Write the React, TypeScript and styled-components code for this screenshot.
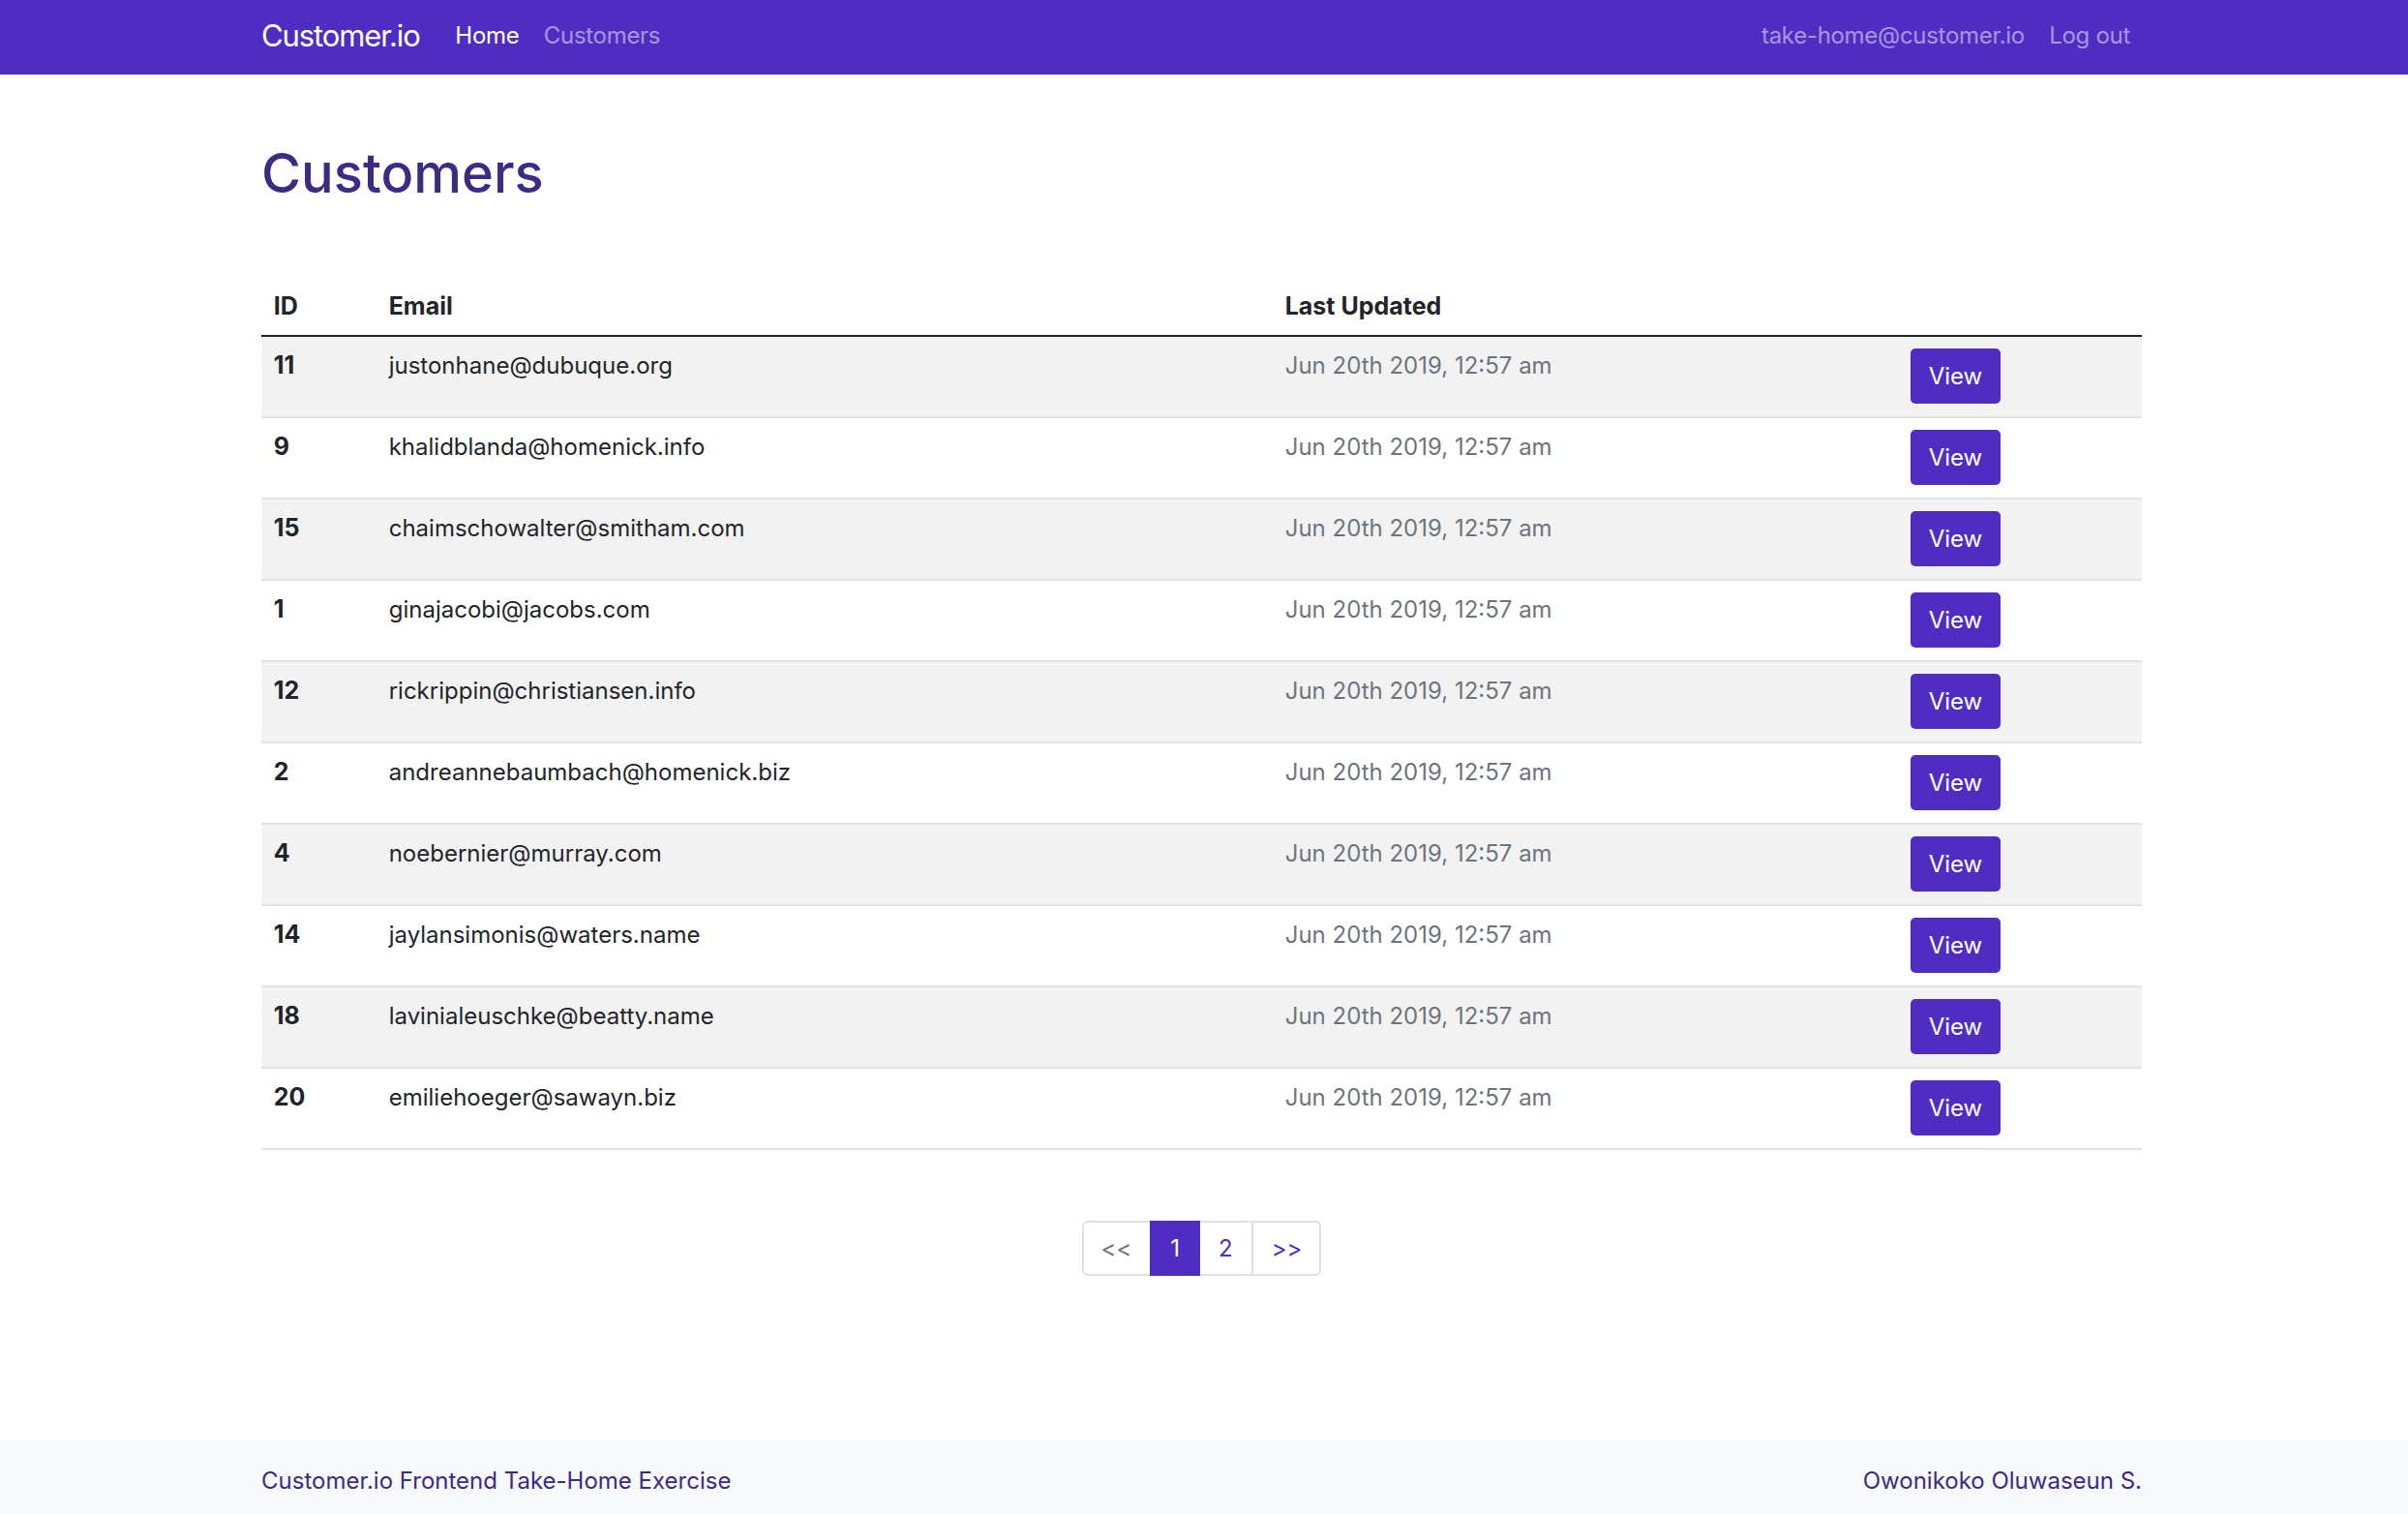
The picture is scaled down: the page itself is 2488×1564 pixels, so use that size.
import styled, { createGlobalStyle } from 'styled-components';

const GlobalStyle = createGlobalStyle`
  html, body {
    margin: 0;
    padding: 0;
    background: #fff;
  }
  body {
    font-family: Inter, "Noto Sans", "Liberation Sans", sans-serif;
    font-size: 24px;
    color: #212529;
  }
  * { box-sizing: border-box; }
`;

const brand = '#4f2dc2';
const deep = '#3c2a83';

const customers = [
  {id: 11, email: 'justonhane@dubuque.org'},
  {id: 9, email: 'khalidblanda@homenick.info'},
  {id: 15, email: 'chaimschowalter@smitham.com'},
  {id: 1, email: 'ginajacobi@jacobs.com'},
  {id: 12, email: 'rickrippin@christiansen.info'},
  {id: 2, email: 'andreannebaumbach@homenick.biz'},
  {id: 4, email: 'noebernier@murray.com'},
  {id: 14, email: 'jaylansimonis@waters.name'},
  {id: 18, email: 'lavinialeuschke@beatty.name'},
  {id: 20, email: 'emiliehoeger@sawayn.biz'},
];

export default function App() {
  return (
    <Page>
      <GlobalStyle />
      <NavBar>
        <Container>
          <NavRow>
            <NavGroup>
              <Brand>Customer.io</Brand>
              <NavLink $active>Home</NavLink>
              <NavLink>Customers</NavLink>
            </NavGroup>
            <NavGroup>
              <NavLink>take-home@customer.io</NavLink>
              <NavLink>Log out</NavLink>
            </NavGroup>
          </NavRow>
        </Container>
      </NavBar>

      <Main>
        <Container>
          <Title>Customers</Title>
          <Table>
            <thead>
              <tr>
                <Th $w={119}>ID</Th>
                <Th $w={926}>Email</Th>
                <Th $w={646}>Last Updated</Th>
                <Th $w={252}></Th>
              </tr>
            </thead>
            <tbody>
              {customers.map((c, i) => (
                <Row key={c.id} $striped={i % 2 === 0}>
                  <IdCell>{c.id}</IdCell>
                  <Td>{c.email}</Td>
                  <DateCell>Jun 20th 2019, 12:57 am</DateCell>
                  <Td><ViewButton>View</ViewButton></Td>
                </Row>
              ))}
            </tbody>
          </Table>

          <Pagination>
            <PageItem $muted>&lt;&lt;</PageItem>
            <PageItem $active>1</PageItem>
            <PageItem>2</PageItem>
            <PageItem>&gt;&gt;</PageItem>
          </Pagination>
        </Container>
      </Main>

      <Footer>
        <Container>
          <FooterRow>
            <span>Customer.io Frontend Take-Home Exercise</span>
            <span>Owonikoko Oluwaseun S.</span>
          </FooterRow>
        </Container>
      </Footer>
    </Page>
  );
}

const Page = styled.div`
  min-height: 100vh;
  display: flex;
  flex-direction: column;
`;

const Container = styled.div`
  width: 1943px;
  margin-left: calc(50% - 974px);
`;

const NavBar = styled.nav`
  background: ${brand};
  height: 77px;
  display: flex;
  align-items: center;
`;

const NavRow = styled.div`
  display: flex;
  justify-content: space-between;
  align-items: center;
  padding-bottom: 3px;
`;

const NavGroup = styled.div`
  display: flex;
  align-items: center;
`;

const Brand = styled.a`
  color: #fff;
  font-size: 31px;
  letter-spacing: -1.1px;
  line-height: 1.5;
  margin-right: 24px;
  cursor: pointer;
`;

const NavLink = styled.a<{ $active?: boolean }>`
  color: ${p => (p.$active ? '#fff' : 'rgba(255,255,255,0.5)')};
  font-size: 24px;
  letter-spacing: -0.3px;
  line-height: 1.5;
  padding: 0 12.7px;
  cursor: pointer;
  &:last-child { padding-right: 12px; }
`;

const Main = styled.main`
  flex: 1;
  padding-top: 67px;
  padding-bottom: 120px;
`;

const Title = styled.h1`
  margin: 0 0 73px;
  font-size: 56px;
  font-weight: 500;
  line-height: 70px;
  color: ${deep};
`;

const Table = styled.table`
  width: 100%;
  border-collapse: collapse;
  table-layout: fixed;
`;

const Th = styled.th<{ $w: number }>`
  width: ${p => p.$w}px;
  text-align: left;
  font-size: 25px;
  font-weight: 700;
  line-height: 35px;
  padding: 12px 12.7px;
  border-bottom: 2.6px solid #212529;
  color: #212529;
`;

const Row = styled.tr<{ $striped: boolean }>`
  background: ${p => (p.$striped ? '#f2f2f2' : '#fff')};
  border-bottom: 2px solid #dee2e6;
`;

const Td = styled.td`
  vertical-align: top;
  padding: 12px 12.7px 13px;
  font-size: 24px;
  line-height: 35px;
  color: #212529;
`;

const IdCell = styled(Td)`
  font-weight: 700;
  font-size: 25px;
`;

const DateCell = styled(Td)`
  color: #6c757d;
`;

const ViewButton = styled.button`
  display: block;
  height: 57px;
  padding: 0 19px;
  border: none;
  border-radius: 5px;
  background: ${brand};
  color: #fff;
  font-family: inherit;
  font-size: 24px;
  cursor: pointer;
`;

const Pagination = styled.div`
  display: flex;
  justify-content: center;
  margin-top: 73px;
`;

const PageItem = styled.a<{ $active?: boolean; $muted?: boolean }>`
  display: block;
  padding: 0 19px;
  height: 57px;
  line-height: 53px;
  font-size: 24px;
  border: 2px solid ${p => (p.$active ? brand : '#dee2e6')};
  margin-left: -2px;
  background: ${p => (p.$active ? brand : '#fff')};
  color: ${p => (p.$active ? '#fff' : p.$muted ? '#6c757d' : brand)};
  position: relative;
  z-index: ${p => (p.$active ? 1 : 0)};
  cursor: pointer;
  &:first-child {
    margin-left: 0;
    border-radius: 6px 0 0 6px;
    padding: 0 19px 0 18px;
  }
  &:last-child {
    border-radius: 0 6px 6px 0;
    padding: 0 18px 0 19px;
  }
`;

const Footer = styled.footer`
  background: #f8f9fa;
  height: 76px;
  display: flex;
  align-items: center;
  padding-top: 8px;
`;

const FooterRow = styled.div`
  display: flex;
  justify-content: space-between;
  font-size: 24px;
  line-height: 1.5;
  color: ${deep};
`;
